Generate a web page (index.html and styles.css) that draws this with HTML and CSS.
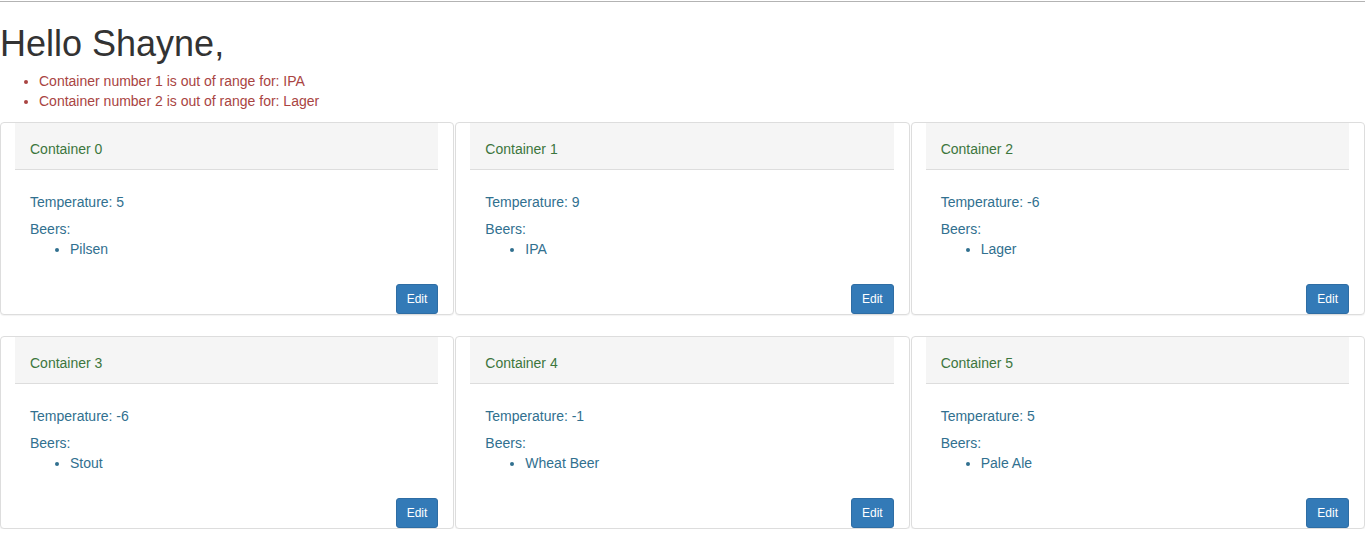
FILE: index.html
```html
<!DOCTYPE html>
<html>
<head>
<meta charset="utf-8">
<title>Containers</title>
<link rel="stylesheet" href="styles.css">
</head>
<body>
<hr class="top-rule">
<h1 class="greeting">Hello Shayne,</h1>
<ul class="alerts">
  <li>Container number 1 is out of range for: IPA</li>
  <li>Container number 2 is out of range for: Lager</li>
</ul>
<div class="grid">
  <div class="card">
    <div class="card-header">Container 0</div>
    <div class="card-body">
      <div class="temp">Temperature: 5</div>
      <div class="beers-label">Beers:</div>
      <ul class="beers"><li>Pilsen</li></ul>
    </div>
    <div class="card-footer"><button class="btn">Edit</button></div>
  </div>
  <div class="card">
    <div class="card-header">Container 1</div>
    <div class="card-body">
      <div class="temp">Temperature: 9</div>
      <div class="beers-label">Beers:</div>
      <ul class="beers"><li>IPA</li></ul>
    </div>
    <div class="card-footer"><button class="btn">Edit</button></div>
  </div>
  <div class="card">
    <div class="card-header">Container 2</div>
    <div class="card-body">
      <div class="temp">Temperature: -6</div>
      <div class="beers-label">Beers:</div>
      <ul class="beers"><li>Lager</li></ul>
    </div>
    <div class="card-footer"><button class="btn">Edit</button></div>
  </div>
  <div class="card">
    <div class="card-header">Container 3</div>
    <div class="card-body">
      <div class="temp">Temperature: -6</div>
      <div class="beers-label">Beers:</div>
      <ul class="beers"><li>Stout</li></ul>
    </div>
    <div class="card-footer"><button class="btn">Edit</button></div>
  </div>
  <div class="card">
    <div class="card-header">Container 4</div>
    <div class="card-body">
      <div class="temp">Temperature: -1</div>
      <div class="beers-label">Beers:</div>
      <ul class="beers"><li>Wheat Beer</li></ul>
    </div>
    <div class="card-footer"><button class="btn">Edit</button></div>
  </div>
  <div class="card">
    <div class="card-header">Container 5</div>
    <div class="card-body">
      <div class="temp">Temperature: 5</div>
      <div class="beers-label">Beers:</div>
      <ul class="beers"><li>Pale Ale</li></ul>
    </div>
    <div class="card-footer"><button class="btn">Edit</button></div>
  </div>
</div>
</body>
</html>
```

FILE: styles.css
```css
html, body {
  margin: 0;
  padding: 0;
  background: #fff;
}
body {
  font-family: "Liberation Sans", Arial, Helvetica, sans-serif;
  font-size: 14px;
  line-height: 20px;
  color: #333;
}
.top-rule {
  margin: 1px 0 0;
  border: 0;
  border-top: 1px solid #b3b3b3;
  height: 0;
}
.greeting {
  font-size: 36px;
  font-weight: 500;
  line-height: 1.1;
  margin: 22px 0 7px;
  color: #333;
}
.alerts {
  margin: 0 0 11px;
  padding-left: 39px;
  color: #a94442;
}
.grid {
  display: grid;
  grid-template-columns: repeat(3, 1fr);
  column-gap: 1px;
  row-gap: 21px;
}
.card {
  border: 1px solid #ddd;
  border-radius: 4px;
  box-shadow: 0 1px 1px rgba(0,0,0,.05);
  background: #fff;
  display: flex;
  flex-direction: column;
}
.card-header {
  margin: 0 15px 0 14px;
  padding: 16px 15px 10px;
  background: #f5f5f5;
  border-bottom: 1px solid #ddd;
  color: #3c763d;
}
.card-body {
  margin: 0 14px;
  padding: 22px 15px 0;
  color: #31708f;
}
.temp {
  margin-bottom: 7px;
}
.beers {
  margin: 0;
  padding-left: 40px;
}
.card-footer {
  margin: 0 15px 0 14px;
  padding-top: 25px;
  display: flex;
  justify-content: flex-end;
}
.btn {
  font-family: "Liberation Sans", Arial, Helvetica, sans-serif;
  font-size: 12px;
  line-height: 18px;
  padding: 5px 10px;
  color: #fff;
  background: #337ab7;
  border: 1px solid #2e6da4;
  border-radius: 3px;
  cursor: pointer;
}
```
